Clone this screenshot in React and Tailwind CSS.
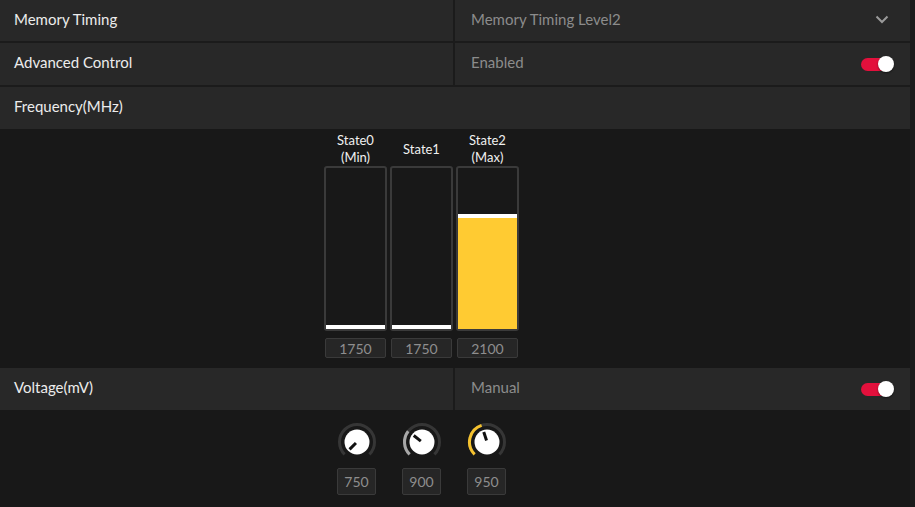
import React from 'react';

const font = { fontFamily: 'Lato, "Noto Sans", sans-serif' };

const Toggle = () => (
    <div className="relative w-[33px] h-[16px] flex items-center">
        <div className="w-[30px] h-[13px] rounded-full bg-[#e3103c]" />
        <div className="absolute right-0 top-0 w-[16px] h-[16px] rounded-full bg-white shadow-[0_1px_2px_rgba(0,0,0,0.5)]" />
    </div>
);

const Chevron = () => (
    <svg width="14" height="9" viewBox="0 0 14 9" className="text-[#9a9a9a] mr-[5px] mb-[2px]">
        <path d="M1.5 1.5 L7 7 L12.5 1.5" fill="none" stroke="currentColor" strokeWidth="2" />
    </svg>
);

const SplitRow = ({ label, value, right, tall }) => (
    <div className={`flex ${tall ? 'h-[42px]' : 'h-[41px]'} gap-[2px]`}>
        <div className="w-[453px] bg-[#282828] flex items-center pl-[14px] pb-[3px] text-[15px] text-[#ececec]">{label}</div>
        <div className="flex-1 bg-[#282828] flex items-center justify-between pl-[16px] pr-[16px] text-[15px] text-[#8c8c8c]">
            <span className="mb-[3px]">{value}</span>
            {right}
        </div>
    </div>
);

const states = [
    { top: 'State0', sub: '(Min)', value: 1750, fill: 0 },
    { top: 'State1', sub: null, value: 1750, fill: 0 },
    { top: 'State2', sub: '(Max)', value: 2100, fill: 111 },
];

const polar = (cx, cy, r, deg) => {
    const a = (deg - 90) * Math.PI / 180;
    return [cx + r * Math.cos(a), cy + r * Math.sin(a)];
};

const arc = (cx, cy, r, from, to) => {
    const [x1, y1] = polar(cx, cy, r, from);
    const [x2, y2] = polar(cx, cy, r, to);
    const large = to - from > 180 ? 1 : 0;
    return `M${x1} ${y1} A${r} ${r} 0 ${large} 1 ${x2} ${y2}`;
};

const Knob = ({ angle, color }) => {
    const [ax, ay] = polar(20, 20, 1.5, angle);
    const [bx, by] = polar(20, 20, 10.5, angle);
    return (
        <svg width="40" height="40" viewBox="0 0 40 40">
            <path d={arc(20, 20, 17.5, -135, 135)} fill="none" stroke="#363636" strokeWidth="3" />
            {color && <path d={arc(20, 20, 17.5, -135, angle)} fill="none" stroke={color} strokeWidth="3" />}
            <circle cx="20" cy="20" r="12.5" fill="#ffffff" />
            <line x1={ax} y1={ay} x2={bx} y2={by} stroke="#111" strokeWidth="3" />
        </svg>
    );
};

const knobs = [
    { value: 750, angle: -135, color: null },
    { value: 900, angle: -52, color: '#a8a8a8' },
    { value: 950, angle: -18, color: '#f5c22e' },
];

const App = () => {
    return (
        <div className="w-[915px] h-[507px] bg-[#1b1b1b] flex overflow-hidden" style={font}>
            <div className="w-[910px] flex flex-col">
                <SplitRow label="Memory Timing" value="Memory Timing Level2" right={<Chevron />} />
                <div className="h-[2px]" />
                <SplitRow label="Advanced Control" value="Enabled" right={<Toggle />} tall />
                <div className="h-[2px]" />
                <div className="h-[42px] bg-[#282828] flex items-center pl-[14px] pb-[3px] text-[15px] text-[#ececec]">Frequency(MHz)</div>

                {/* frequency states */}
                <div className="h-[239px] bg-[#181818] flex gap-[3px] pl-[324px] pt-[3px]">
                    {states.map((s) => (
                        <div key={s.top} className="w-[63px] flex flex-col items-center">
                            <div className="h-[34px] flex flex-col justify-center items-center text-[13px] leading-[17px] text-[#f0f0f0]">
                                <span>{s.top}</span>
                                {s.sub && <span>{s.sub}</span>}
                            </div>
                            <div className="w-[63px] h-[165px] border-2 border-[#3a3a3a] rounded-[3px] bg-[#181818] flex flex-col justify-end">
                                <div className="h-[4px] bg-white" />
                                {s.fill > 0 && <div className="bg-[#ffcb32]" style={{ height: s.fill }} />}
                            </div>
                            <div className="mt-[7px] w-[61px] h-[20px] border border-[#3a3a3a] rounded-[2px] bg-[#262626] flex items-center justify-center text-[14px] text-[#8e8e8e]">
                                {s.value}
                            </div>
                        </div>
                    ))}
                </div>

                <SplitRow label="Voltage(mV)" value="Manual" right={<Toggle />} tall />

                {/* voltage knobs */}
                <div className="flex-1 bg-[#181818] flex gap-[26px] pl-[337px] pt-[12px]">
                    {knobs.map((k) => (
                        <div key={k.value} className="w-[39px] flex flex-col items-center">
                            <Knob angle={k.angle} color={k.color} />
                            <div className="mt-[6px] w-[39px] h-[27px] border border-[#3a3a3a] rounded-[2px] bg-[#262626] flex items-center justify-center text-[14px] text-[#8e8e8e]">
                                {k.value}
                            </div>
                        </div>
                    ))}
                </div>
            </div>
            <div className="flex-1 bg-[#1b1b1b]" />
        </div>
    );
};

export default App;
